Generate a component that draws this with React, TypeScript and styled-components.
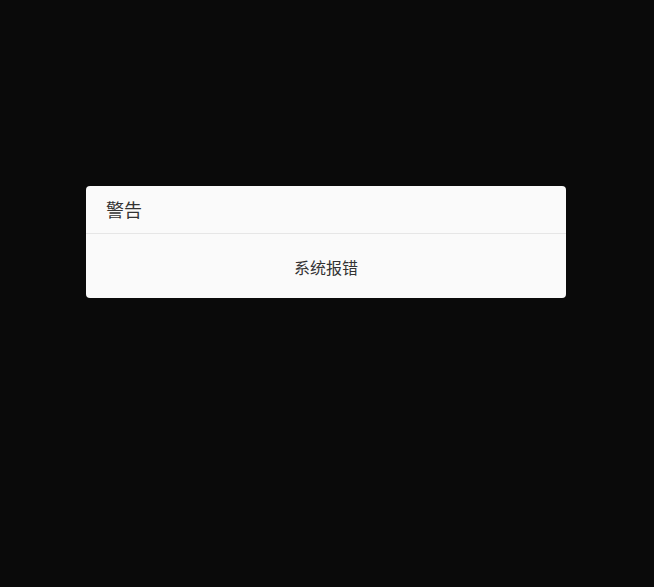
import styled, { createGlobalStyle } from 'styled-components';

const GlobalStyle = createGlobalStyle`
  html, body {
    margin: 0;
    padding: 0;
    background: #0a0a0a;
  }
  body {
    font-family: "Noto Sans CJK SC", "Noto Sans", sans-serif;
  }
`;

const Overlay = styled.div`
  width: 654px;
  height: 587px;
  box-sizing: border-box;
  padding: 186px 0 0 86px;
  background: #0a0a0a;
`;

const Dialog = styled.div`
  width: 480px;
  background: #fafafa;
  border-radius: 4px;
  overflow: hidden;
`;

const Header = styled.div`
  height: 48px;
  box-sizing: border-box;
  padding: 0 20px 1px;
  display: flex;
  align-items: center;
  border-bottom: 1px solid #e6e6e6;
  font-size: 18px;
  color: #333;
`;

const Body = styled.div`
  height: 64px;
  box-sizing: border-box;
  padding-top: 2px;
  display: flex;
  align-items: center;
  justify-content: center;
  font-size: 16px;
  color: #333;
`;

const App = () => {
  return (
    <>
      <GlobalStyle />
      <Overlay>
        <Dialog>
          <Header>警告</Header>
          <Body>系统报错</Body>
        </Dialog>
      </Overlay>
    </>
  );
};

export default App;
